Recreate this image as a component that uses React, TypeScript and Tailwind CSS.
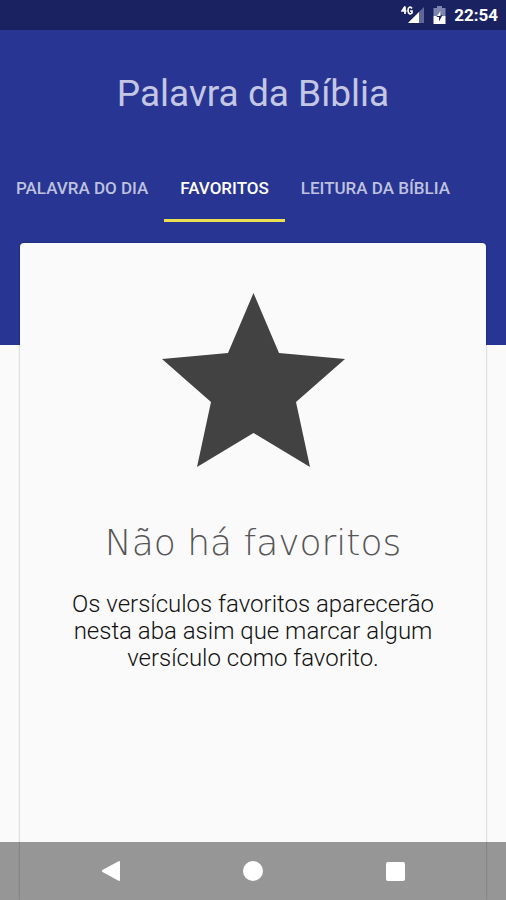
import React from 'react';

interface Tab {
    id: string;
    label: string;
}

const tabs: Tab[] = [
    { id: 'palavra', label: 'Palavra do dia' },
    { id: 'favoritos', label: 'Favoritos' },
    { id: 'leitura', label: 'Leitura da Bíblia' },
];

const StatusBar: React.FC = () => (
    <div className="flex h-[30px] items-center justify-end bg-[#1a2261] pr-2 text-white">
        <svg className="mr-2 h-[18px] w-6" viewBox="0 0 24 18" role="img" aria-label="Sinal 4G">
            <path d="M23 1v16H7z" fill="#5f6797" />
            <path d="M18 6v11H7z" fill="#fff" />
            <path d="M4 .5 1 5h4.500M4 .5V8M11 2.500C9.500 0 7 1 7 4.500s2.500 4 4 2.500V5H9" fill="none" stroke="#fff" strokeWidth="1.700" />
        </svg>
        <svg className="mr-2 h-[18px] w-[13px]" viewBox="0 0 13 18" role="img" aria-label="Bateria carregando">
            <path d="M4 0h5v2h3.500v8H.5V2H4z" fill="#7d84b0" />
            <path d="M.5 10h12v8H.5z" fill="#fff" />
            <path d="M7.500 4.500 3.500 11H6v4.500L9.500 9h-2z" fill="#1a2261" />
            <path d="M7.500 4.500 4 10h3.500z" fill="#fff" />
        </svg>
        <time className="text-[17px] leading-6 font-bold">22:54</time>
    </div>
);

const TabBar: React.FC<{ active: string; onChange: (id: string) => void }> = ({ active, onChange }) => (
    <div role="tablist" className="flex h-[66px]">
        {tabs.map((tab) => (
            <button
                key={tab.id}
                role="tab"
                aria-selected={tab.id === active}
                onClick={() => onChange(tab.id)}
                className={`border-b-[3px] px-4 pt-0.5 text-[17px] font-medium whitespace-nowrap uppercase ${
                    tab.id === active ? 'border-[#ecdf50] text-white' : 'border-transparent text-[#bec2de]'
                }`}
            >
                {tab.label}
            </button>
        ))}
    </div>
);

const NavigationBar: React.FC = () => (
    <nav className="fixed inset-x-0 bottom-0 flex h-[58px] items-center justify-center bg-black/40">
        <button aria-label="Voltar" className="flex w-[142px] justify-center">
            <svg className="h-5 w-5" viewBox="0 0 20 20" fill="#fff">
                <path d="M18 0q1 0 1 1v18q0 1-1 1L1.500 11q-1.500-1 0-2z" />
            </svg>
        </button>
        <button aria-label="Início" className="flex w-[142px] justify-center">
            <span className="h-5 w-5 rounded-full bg-white" />
        </button>
        <button aria-label="Recentes" className="flex w-[142px] justify-center">
            <span className="h-[19px] w-[19px] rounded-[2px] bg-white" />
        </button>
    </nav>
);

const App: React.FC = () => {
    const [active, setActive] = React.useState('favoritos');

    return (
        <div className="flex min-h-screen flex-col bg-[#fafafa] font-['Roboto',sans-serif]">
            <header className="bg-[#283593] pb-[123px]">
                <StatusBar />
                <h1 className="pt-10 pb-[38px] text-center text-[37px] leading-12 text-[#c3c7e3]">Palavra da Bíblia</h1>
                <TabBar active={active} onChange={setActive} />
            </header>

            <main className="relative mx-5 -mt-[102px] flex grow flex-col items-center rounded-t bg-[#fafafa] px-8 pt-[50px] pb-20 text-center shadow-[0_0_2px_rgba(0,0,0,0.4)]">
                <svg className="h-[174px] w-[183px]" viewBox="0 0 183 174" aria-hidden="true">
                    <path d="M91.500 0 117 60l66 6-49 43 14 65-56.500-34L35 174l14-65L0 66l66-6z" fill="#424242" />
                </svg>
                <h2 className="mt-14 text-[36px] leading-10 font-extralight text-[#555] font-['DejaVu_Sans_Light','DejaVu_Sans',sans-serif]">
                    Não há favoritos
                </h2>
                <p className="mt-7 text-[24px] leading-[27px] font-light text-[#111]">
                    Os versículos favoritos aparecerão nesta aba asim que marcar algum versículo como favorito.
                </p>
            </main>

            <NavigationBar />
        </div>
    );
};

export default App;
